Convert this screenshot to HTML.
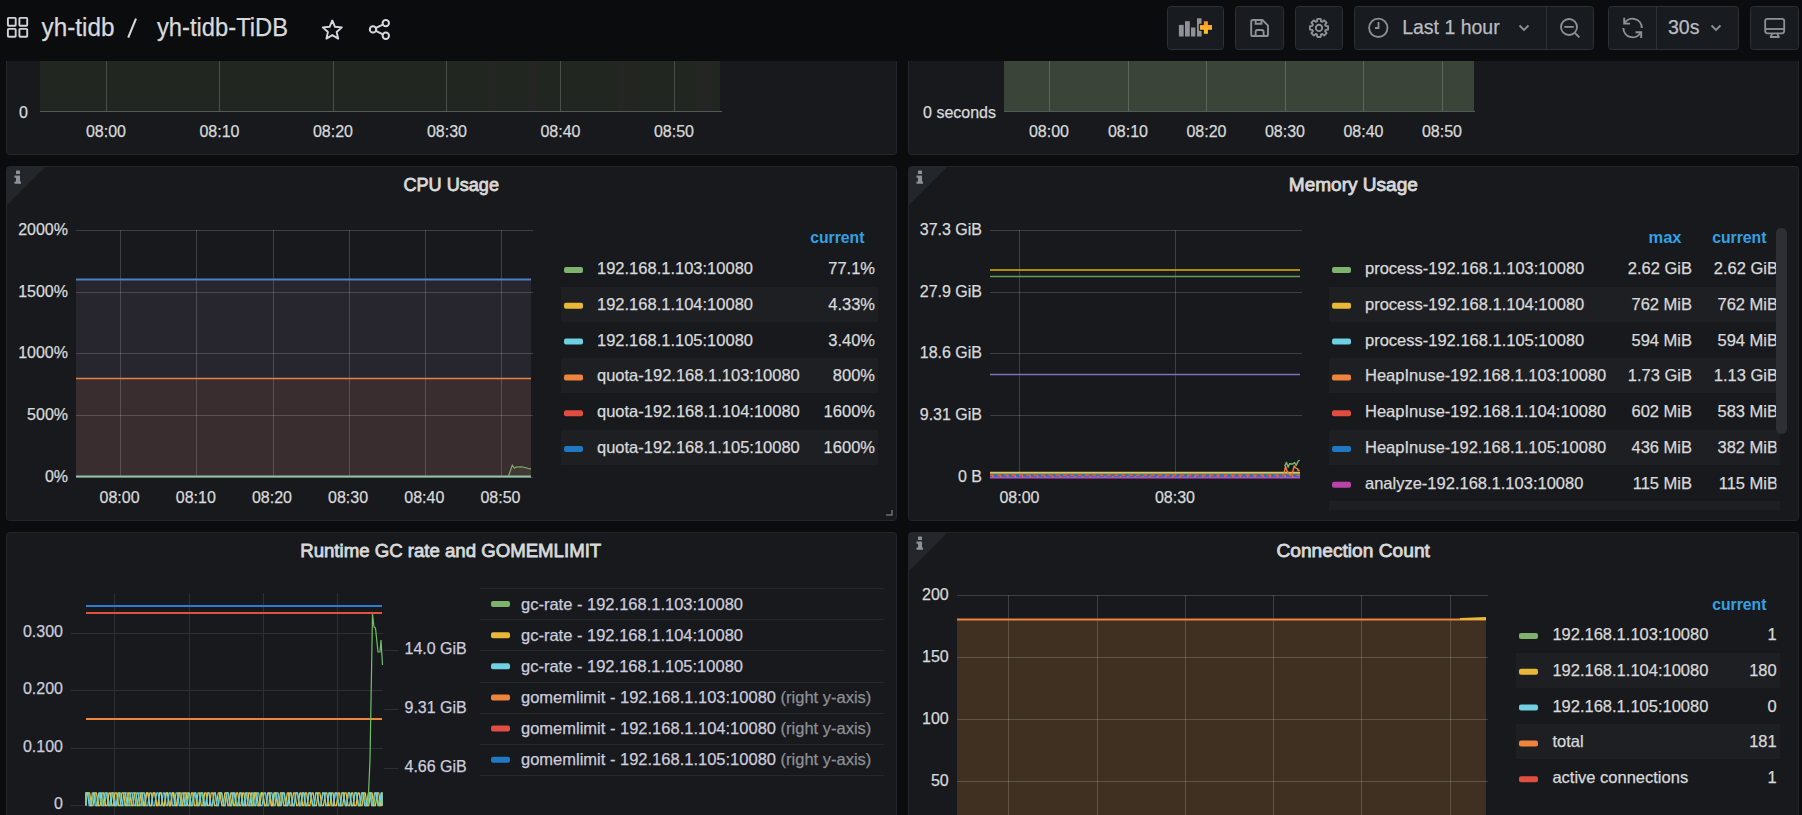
<!DOCTYPE html>
<html><head><meta charset="utf-8"><title>yh-tidb-TiDB</title>
<style>
html,body{margin:0;padding:0;background:#0b0c0e;width:1802px;height:815px;overflow:hidden}
svg{position:absolute;left:0;top:0;display:block}
text{font-family:"Liberation Sans",sans-serif}
.t{stroke-width:0.25px}
</style></head><body>
<svg width="1802" height="815" viewBox="0 0 1802 815">
<rect x="0" y="0" width="1802" height="815" fill="#0b0c0e"/>
<rect x="6.5" y="30.5" width="890" height="124" rx="3" ry="3" fill="#17191d" stroke="#24262b" stroke-width="1"/>
<rect x="908.5" y="30.5" width="890" height="124" rx="3" ry="3" fill="#17191d" stroke="#24262b" stroke-width="1"/>
<rect x="6.5" y="166.5" width="890" height="354" rx="3" ry="3" fill="#17191d" stroke="#24262b" stroke-width="1"/>
<rect x="908.5" y="166.5" width="890" height="354" rx="3" ry="3" fill="#17191d" stroke="#24262b" stroke-width="1"/>
<rect x="6.5" y="532.5" width="890" height="307" rx="3" ry="3" fill="#17191d" stroke="#24262b" stroke-width="1"/>
<rect x="908.5" y="532.5" width="890" height="307" rx="3" ry="3" fill="#17191d" stroke="#24262b" stroke-width="1"/>
<rect x="40" y="61" width="680" height="50" fill="#212621" />
<rect x="489" y="61" width="7.5" height="50" fill="#252523" />
<rect x="528.7" y="61" width="8.099999999999909" height="50" fill="#252523" />
<rect x="617.4" y="61" width="8.100000000000023" height="50" fill="#252523" />
<rect x="697" y="61" width="14" height="50" fill="#252523" />
<line x1="106.5" y1="61" x2="106.5" y2="112" stroke="#4b4f4b" stroke-width="1" />
<line x1="219.5" y1="61" x2="219.5" y2="112" stroke="#4b4f4b" stroke-width="1" />
<line x1="333.5" y1="61" x2="333.5" y2="112" stroke="#4b4f4b" stroke-width="1" />
<line x1="446.5" y1="61" x2="446.5" y2="112" stroke="#4b4f4b" stroke-width="1" />
<line x1="560.5" y1="61" x2="560.5" y2="112" stroke="#4b4f4b" stroke-width="1" />
<line x1="674.5" y1="61" x2="674.5" y2="112" stroke="#4b4f4b" stroke-width="1" />
<line x1="40" y1="111.5" x2="722" y2="111.5" stroke="#55585a" stroke-width="1" />
<text x="28" y="117.5" font-size="16" fill="#d8d9da" class="t" stroke="#d8d9da" text-anchor="end" font-weight="normal" >0</text>
<text x="106" y="136.5" font-size="16" fill="#d8d9da" class="t" stroke="#d8d9da" text-anchor="middle" font-weight="normal" >08:00</text>
<text x="219.5" y="136.5" font-size="16" fill="#d8d9da" class="t" stroke="#d8d9da" text-anchor="middle" font-weight="normal" >08:10</text>
<text x="333" y="136.5" font-size="16" fill="#d8d9da" class="t" stroke="#d8d9da" text-anchor="middle" font-weight="normal" >08:20</text>
<text x="447" y="136.5" font-size="16" fill="#d8d9da" class="t" stroke="#d8d9da" text-anchor="middle" font-weight="normal" >08:30</text>
<text x="560.5" y="136.5" font-size="16" fill="#d8d9da" class="t" stroke="#d8d9da" text-anchor="middle" font-weight="normal" >08:40</text>
<text x="674" y="136.5" font-size="16" fill="#d8d9da" class="t" stroke="#d8d9da" text-anchor="middle" font-weight="normal" >08:50</text>
<rect x="1004" y="61" width="470" height="50" fill="#3b4439" />
<line x1="1049.5" y1="61" x2="1049.5" y2="112" stroke="#5c6659" stroke-width="1" />
<line x1="1128.5" y1="61" x2="1128.5" y2="112" stroke="#5c6659" stroke-width="1" />
<line x1="1206.5" y1="61" x2="1206.5" y2="112" stroke="#5c6659" stroke-width="1" />
<line x1="1285.5" y1="61" x2="1285.5" y2="112" stroke="#5c6659" stroke-width="1" />
<line x1="1363.5" y1="61" x2="1363.5" y2="112" stroke="#5c6659" stroke-width="1" />
<line x1="1442.5" y1="61" x2="1442.5" y2="112" stroke="#5c6659" stroke-width="1" />
<line x1="1004" y1="111.5" x2="1475" y2="111.5" stroke="#55585a" stroke-width="1" />
<text x="996" y="117.5" font-size="16" fill="#d8d9da" class="t" stroke="#d8d9da" text-anchor="end" font-weight="normal" >0 seconds</text>
<text x="1049" y="136.5" font-size="16" fill="#d8d9da" class="t" stroke="#d8d9da" text-anchor="middle" font-weight="normal" >08:00</text>
<text x="1128" y="136.5" font-size="16" fill="#d8d9da" class="t" stroke="#d8d9da" text-anchor="middle" font-weight="normal" >08:10</text>
<text x="1206.5" y="136.5" font-size="16" fill="#d8d9da" class="t" stroke="#d8d9da" text-anchor="middle" font-weight="normal" >08:20</text>
<text x="1285" y="136.5" font-size="16" fill="#d8d9da" class="t" stroke="#d8d9da" text-anchor="middle" font-weight="normal" >08:30</text>
<text x="1363.5" y="136.5" font-size="16" fill="#d8d9da" class="t" stroke="#d8d9da" text-anchor="middle" font-weight="normal" >08:40</text>
<text x="1442" y="136.5" font-size="16" fill="#d8d9da" class="t" stroke="#d8d9da" text-anchor="middle" font-weight="normal" >08:50</text>
<path d="M7 167 L45 167 L7 205 Z" fill="#23262b"/>
<rect x="16.0" y="170.5" width="4" height="3.5" rx="0.5" fill="#8e9196"/>
<path d="M14.5 175.5 h5.5 v6 h1 v2.2 h-6.5 v-2.2 h1.5 v-3.8 h-1.5 z" fill="#8e9196"/>
<text x="451.2" y="190.9" font-size="18.6" fill="#d8d9da" stroke="#d8d9da" stroke-width="0.8" text-anchor="middle" textLength="95.5" lengthAdjust="spacingAndGlyphs">CPU Usage</text>
<rect x="76" y="279" width="455" height="198" fill="#27252e" />
<rect x="76" y="378.5" width="455" height="98.5" fill="#3a2d2f" />
<line x1="76" y1="230.5" x2="533" y2="230.5" stroke="rgba(255,255,255,0.17)" stroke-width="1" />
<line x1="76" y1="292.5" x2="533" y2="292.5" stroke="rgba(255,255,255,0.17)" stroke-width="1" />
<line x1="76" y1="353.5" x2="533" y2="353.5" stroke="rgba(255,255,255,0.17)" stroke-width="1" />
<line x1="76" y1="415.5" x2="533" y2="415.5" stroke="rgba(255,255,255,0.17)" stroke-width="1" />
<line x1="76" y1="477.5" x2="533" y2="477.5" stroke="rgba(255,255,255,0.17)" stroke-width="1" />
<line x1="120.5" y1="230" x2="120.5" y2="477" stroke="rgba(255,255,255,0.17)" stroke-width="1" />
<line x1="196.5" y1="230" x2="196.5" y2="477" stroke="rgba(255,255,255,0.17)" stroke-width="1" />
<line x1="273.5" y1="230" x2="273.5" y2="477" stroke="rgba(255,255,255,0.17)" stroke-width="1" />
<line x1="349.5" y1="230" x2="349.5" y2="477" stroke="rgba(255,255,255,0.17)" stroke-width="1" />
<line x1="425.5" y1="230" x2="425.5" y2="477" stroke="rgba(255,255,255,0.17)" stroke-width="1" />
<line x1="501.5" y1="230" x2="501.5" y2="477" stroke="rgba(255,255,255,0.17)" stroke-width="1" />
<line x1="76" y1="279.5" x2="531" y2="279.5" stroke="#4f7fc4" stroke-width="2" />
<line x1="76" y1="378.5" x2="531" y2="378.5" stroke="#e5824a" stroke-width="1.5" />
<line x1="76" y1="476.5" x2="531" y2="476.5" stroke="#94c2a6" stroke-width="2" />
<polygon points="508.5,476 512.3,465.2 514.5,468.3 516,467 521.5,466.8 526,467.8 529.5,469 531,468.5 531,476" fill="rgba(126,178,109,0.10)"/>
<polyline points="508.5,476 512.3,465.2 514.5,468.3 516,467 521.5,466.8 526,467.8 529.5,469 531,468.5" fill="none" stroke="#82b571" stroke-width="1.1"/>
<text x="68" y="234.8" font-size="16" fill="#d8d9da" class="t" stroke="#d8d9da" text-anchor="end" font-weight="normal" >2000%</text>
<text x="68" y="296.5" font-size="16" fill="#d8d9da" class="t" stroke="#d8d9da" text-anchor="end" font-weight="normal" >1500%</text>
<text x="68" y="358.2" font-size="16" fill="#d8d9da" class="t" stroke="#d8d9da" text-anchor="end" font-weight="normal" >1000%</text>
<text x="68" y="419.90000000000003" font-size="16" fill="#d8d9da" class="t" stroke="#d8d9da" text-anchor="end" font-weight="normal" >500%</text>
<text x="68" y="481.6" font-size="16" fill="#d8d9da" class="t" stroke="#d8d9da" text-anchor="end" font-weight="normal" >0%</text>
<text x="119.6" y="502.8" font-size="16" fill="#d8d9da" class="t" stroke="#d8d9da" text-anchor="middle" font-weight="normal" >08:00</text>
<text x="195.8" y="502.8" font-size="16" fill="#d8d9da" class="t" stroke="#d8d9da" text-anchor="middle" font-weight="normal" >08:10</text>
<text x="272" y="502.8" font-size="16" fill="#d8d9da" class="t" stroke="#d8d9da" text-anchor="middle" font-weight="normal" >08:20</text>
<text x="348.1" y="502.8" font-size="16" fill="#d8d9da" class="t" stroke="#d8d9da" text-anchor="middle" font-weight="normal" >08:30</text>
<text x="424.3" y="502.8" font-size="16" fill="#d8d9da" class="t" stroke="#d8d9da" text-anchor="middle" font-weight="normal" >08:40</text>
<text x="500.5" y="502.8" font-size="16" fill="#d8d9da" class="t" stroke="#d8d9da" text-anchor="middle" font-weight="normal" >08:50</text>
<text x="864.5" y="243.3" font-size="16.3" fill="#33a2e5" text-anchor="end" font-weight="bold" textLength="54.3" lengthAdjust="spacingAndGlyphs">current</text>
<rect x="564" y="267.0" width="19" height="6" rx="2" fill="#7eb26d"/>
<text x="597" y="274.0" font-size="16.5" fill="#d8d9da" class="t" stroke="#d8d9da" text-anchor="start" font-weight="normal" >192.168.1.103:10080</text>
<text x="875" y="274.0" font-size="16.5" fill="#d8d9da" class="t" stroke="#d8d9da" text-anchor="end" font-weight="normal" >77.1%</text>
<rect x="561" y="287" width="317" height="35" fill="#1e1f23" />
<rect x="564" y="302.8" width="19" height="6" rx="2" fill="#eab839"/>
<text x="597" y="309.8" font-size="16.5" fill="#d8d9da" class="t" stroke="#d8d9da" text-anchor="start" font-weight="normal" >192.168.1.104:10080</text>
<text x="875" y="309.8" font-size="16.5" fill="#d8d9da" class="t" stroke="#d8d9da" text-anchor="end" font-weight="normal" >4.33%</text>
<rect x="564" y="338.6" width="19" height="6" rx="2" fill="#6ed0e0"/>
<text x="597" y="345.6" font-size="16.5" fill="#d8d9da" class="t" stroke="#d8d9da" text-anchor="start" font-weight="normal" >192.168.1.105:10080</text>
<text x="875" y="345.6" font-size="16.5" fill="#d8d9da" class="t" stroke="#d8d9da" text-anchor="end" font-weight="normal" >3.40%</text>
<rect x="561" y="358" width="317" height="35" fill="#1e1f23" />
<rect x="564" y="374.4" width="19" height="6" rx="2" fill="#ef843c"/>
<text x="597" y="381.4" font-size="16.5" fill="#d8d9da" class="t" stroke="#d8d9da" text-anchor="start" font-weight="normal" >quota-192.168.1.103:10080</text>
<text x="875" y="381.4" font-size="16.5" fill="#d8d9da" class="t" stroke="#d8d9da" text-anchor="end" font-weight="normal" >800%</text>
<rect x="564" y="410.2" width="19" height="6" rx="2" fill="#e24d42"/>
<text x="597" y="417.2" font-size="16.5" fill="#d8d9da" class="t" stroke="#d8d9da" text-anchor="start" font-weight="normal" >quota-192.168.1.104:10080</text>
<text x="875" y="417.2" font-size="16.5" fill="#d8d9da" class="t" stroke="#d8d9da" text-anchor="end" font-weight="normal" >1600%</text>
<rect x="561" y="430" width="317" height="35" fill="#1e1f23" />
<rect x="564" y="446.0" width="19" height="6" rx="2" fill="#1f78c1"/>
<text x="597" y="453.0" font-size="16.5" fill="#d8d9da" class="t" stroke="#d8d9da" text-anchor="start" font-weight="normal" >quota-192.168.1.105:10080</text>
<text x="875" y="453.0" font-size="16.5" fill="#d8d9da" class="t" stroke="#d8d9da" text-anchor="end" font-weight="normal" >1600%</text>
<path d="M886 515 h6 v-5" fill="none" stroke="#6e7073" stroke-width="1.5"/>
<path d="M909 167 L947 167 L909 205 Z" fill="#23262b"/>
<rect x="918.0" y="170.5" width="4" height="3.5" rx="0.5" fill="#8e9196"/>
<path d="M916.5 175.5 h5.5 v6 h1 v2.2 h-6.5 v-2.2 h1.5 v-3.8 h-1.5 z" fill="#8e9196"/>
<text x="1353.3" y="190.9" font-size="18.6" fill="#d8d9da" stroke="#d8d9da" stroke-width="0.8" text-anchor="middle" textLength="129" lengthAdjust="spacingAndGlyphs">Memory Usage</text>
<line x1="990" y1="230.5" x2="1302" y2="230.5" stroke="rgba(255,255,255,0.17)" stroke-width="1" />
<line x1="990" y1="292.5" x2="1302" y2="292.5" stroke="rgba(255,255,255,0.17)" stroke-width="1" />
<line x1="990" y1="353.5" x2="1302" y2="353.5" stroke="rgba(255,255,255,0.17)" stroke-width="1" />
<line x1="990" y1="415.5" x2="1302" y2="415.5" stroke="rgba(255,255,255,0.17)" stroke-width="1" />
<line x1="990" y1="477.5" x2="1300" y2="477.5" stroke="rgba(255,255,255,0.17)" stroke-width="1" />
<line x1="1019.5" y1="230" x2="1019.5" y2="477" stroke="rgba(255,255,255,0.17)" stroke-width="1" />
<line x1="1175.5" y1="230" x2="1175.5" y2="477" stroke="rgba(255,255,255,0.17)" stroke-width="1" />
<line x1="990" y1="270" x2="1300" y2="270" stroke="#e0b400" stroke-width="1.5" />
<line x1="990" y1="276.5" x2="1300" y2="276.5" stroke="#629e51" stroke-width="1.5" />
<line x1="990" y1="374.5" x2="1300" y2="374.5" stroke="#806eb7" stroke-width="1.5" />
<line x1="990" y1="476" x2="1300" y2="476" stroke="#1f78c1" stroke-width="2.2" />
<line x1="990" y1="477.7" x2="1300" y2="477.7" stroke="#d044c0" stroke-width="1.6" />
<line x1="990" y1="473.9" x2="1300" y2="473.9" stroke="#6ed0e0" stroke-width="1.2" />
<line x1="990" y1="472.4" x2="1300" y2="472.4" stroke="#f2c040" stroke-width="1.5" />
<line x1="990" y1="475.2" x2="1300" y2="475.2" stroke="#f05a32" stroke-width="1.6" stroke-dasharray="4 3.3"/>
<line x1="992" y1="476.7" x2="1300" y2="476.7" stroke="#f07838" stroke-width="1" stroke-dasharray="1.5 6"/>
<polyline points="1284.6,466.3 1286.5,462.4 1288.2,467.2 1289.5,463.7 1292.7,464 1294.5,462.4 1296.2,465.5 1297.9,461.6 1299.6,460.1" fill="none" stroke="#7eb26d" stroke-width="1.4" stroke-linejoin="round"/>
<polyline points="1284.2,473.2 1285.5,466.3 1287.2,471.5 1289.3,474 1292.3,473.4 1294.2,465.9 1295.8,468 1297.5,468.9 1298.3,470.6 1299.6,470.2" fill="none" stroke="#ef843c" stroke-width="1.4" stroke-linejoin="round"/>
<text x="982" y="234.8" font-size="16" fill="#d8d9da" class="t" stroke="#d8d9da" text-anchor="end" font-weight="normal" >37.3 GiB</text>
<text x="982" y="296.5" font-size="16" fill="#d8d9da" class="t" stroke="#d8d9da" text-anchor="end" font-weight="normal" >27.9 GiB</text>
<text x="982" y="358.2" font-size="16" fill="#d8d9da" class="t" stroke="#d8d9da" text-anchor="end" font-weight="normal" >18.6 GiB</text>
<text x="982" y="419.90000000000003" font-size="16" fill="#d8d9da" class="t" stroke="#d8d9da" text-anchor="end" font-weight="normal" >9.31 GiB</text>
<text x="982" y="481.6" font-size="16" fill="#d8d9da" class="t" stroke="#d8d9da" text-anchor="end" font-weight="normal" >0 B</text>
<text x="1019.5" y="502.8" font-size="16" fill="#d8d9da" class="t" stroke="#d8d9da" text-anchor="middle" font-weight="normal" >08:00</text>
<text x="1175" y="502.8" font-size="16" fill="#d8d9da" class="t" stroke="#d8d9da" text-anchor="middle" font-weight="normal" >08:30</text>
<text x="1681.5" y="243.3" font-size="16.3" fill="#33a2e5" text-anchor="end" font-weight="bold" textLength="33" lengthAdjust="spacingAndGlyphs">max</text>
<text x="1766.5" y="243.3" font-size="16.3" fill="#33a2e5" text-anchor="end" font-weight="bold" textLength="54.3" lengthAdjust="spacingAndGlyphs">current</text>
<clipPath id="memclip"><rect x="1325" y="250" width="451.5" height="260"/></clipPath>
<clipPath id="memclip2"><rect x="1325" y="250" width="455" height="260"/></clipPath>
<g clip-path="url(#memclip2)">
<rect x="1329" y="287" width="451" height="35" fill="#1e1f23" />
<rect x="1329" y="358" width="451" height="35" fill="#1e1f23" />
<rect x="1329" y="430" width="451" height="35" fill="#1e1f23" />
<rect x="1329" y="501" width="451" height="35" fill="#1e1f23" />
</g>
<g clip-path="url(#memclip)">
<rect x="1332" y="267.0" width="19" height="6" rx="2" fill="#7eb26d"/>
<text x="1365" y="274.0" font-size="16.5" fill="#d8d9da" class="t" stroke="#d8d9da" text-anchor="start" font-weight="normal" >process-192.168.1.103:10080</text>
<text x="1692" y="274.0" font-size="16.5" fill="#d8d9da" class="t" stroke="#d8d9da" text-anchor="end" font-weight="normal" >2.62 GiB</text>
<text x="1778" y="274.0" font-size="16.5" fill="#d8d9da" class="t" stroke="#d8d9da" text-anchor="end" font-weight="normal" >2.62 GiB</text>
<rect x="1332" y="302.8" width="19" height="6" rx="2" fill="#eab839"/>
<text x="1365" y="309.8" font-size="16.5" fill="#d8d9da" class="t" stroke="#d8d9da" text-anchor="start" font-weight="normal" >process-192.168.1.104:10080</text>
<text x="1692" y="309.8" font-size="16.5" fill="#d8d9da" class="t" stroke="#d8d9da" text-anchor="end" font-weight="normal" >762 MiB</text>
<text x="1778" y="309.8" font-size="16.5" fill="#d8d9da" class="t" stroke="#d8d9da" text-anchor="end" font-weight="normal" >762 MiB</text>
<rect x="1332" y="338.6" width="19" height="6" rx="2" fill="#6ed0e0"/>
<text x="1365" y="345.6" font-size="16.5" fill="#d8d9da" class="t" stroke="#d8d9da" text-anchor="start" font-weight="normal" >process-192.168.1.105:10080</text>
<text x="1692" y="345.6" font-size="16.5" fill="#d8d9da" class="t" stroke="#d8d9da" text-anchor="end" font-weight="normal" >594 MiB</text>
<text x="1778" y="345.6" font-size="16.5" fill="#d8d9da" class="t" stroke="#d8d9da" text-anchor="end" font-weight="normal" >594 MiB</text>
<rect x="1332" y="374.4" width="19" height="6" rx="2" fill="#ef843c"/>
<text x="1365" y="381.4" font-size="16.5" fill="#d8d9da" class="t" stroke="#d8d9da" text-anchor="start" font-weight="normal" >HeapInuse-192.168.1.103:10080</text>
<text x="1692" y="381.4" font-size="16.5" fill="#d8d9da" class="t" stroke="#d8d9da" text-anchor="end" font-weight="normal" >1.73 GiB</text>
<text x="1778" y="381.4" font-size="16.5" fill="#d8d9da" class="t" stroke="#d8d9da" text-anchor="end" font-weight="normal" >1.13 GiB</text>
<rect x="1332" y="410.2" width="19" height="6" rx="2" fill="#e24d42"/>
<text x="1365" y="417.2" font-size="16.5" fill="#d8d9da" class="t" stroke="#d8d9da" text-anchor="start" font-weight="normal" >HeapInuse-192.168.1.104:10080</text>
<text x="1692" y="417.2" font-size="16.5" fill="#d8d9da" class="t" stroke="#d8d9da" text-anchor="end" font-weight="normal" >602 MiB</text>
<text x="1778" y="417.2" font-size="16.5" fill="#d8d9da" class="t" stroke="#d8d9da" text-anchor="end" font-weight="normal" >583 MiB</text>
<rect x="1332" y="446.0" width="19" height="6" rx="2" fill="#1f78c1"/>
<text x="1365" y="453.0" font-size="16.5" fill="#d8d9da" class="t" stroke="#d8d9da" text-anchor="start" font-weight="normal" >HeapInuse-192.168.1.105:10080</text>
<text x="1692" y="453.0" font-size="16.5" fill="#d8d9da" class="t" stroke="#d8d9da" text-anchor="end" font-weight="normal" >436 MiB</text>
<text x="1778" y="453.0" font-size="16.5" fill="#d8d9da" class="t" stroke="#d8d9da" text-anchor="end" font-weight="normal" >382 MiB</text>
<rect x="1332" y="481.79999999999995" width="19" height="6" rx="2" fill="#ba43a9"/>
<text x="1365" y="488.79999999999995" font-size="16.5" fill="#d8d9da" class="t" stroke="#d8d9da" text-anchor="start" font-weight="normal" >analyze-192.168.1.103:10080</text>
<text x="1692" y="488.79999999999995" font-size="16.5" fill="#d8d9da" class="t" stroke="#d8d9da" text-anchor="end" font-weight="normal" >115 MiB</text>
<text x="1778" y="488.79999999999995" font-size="16.5" fill="#d8d9da" class="t" stroke="#d8d9da" text-anchor="end" font-weight="normal" >115 MiB</text>
</g>
<rect x="1776" y="228" width="11" height="206" rx="5" fill="#2c2f34"/>
<text x="450.7" y="557" font-size="18.6" fill="#d8d9da" stroke="#d8d9da" stroke-width="0.8" text-anchor="middle" textLength="301" lengthAdjust="spacingAndGlyphs">Runtime GC rate and GOMEMLIMIT</text>
<line x1="71" y1="633.5" x2="383" y2="633.5" stroke="#2c2f33" stroke-width="1" />
<line x1="71" y1="690.5" x2="383" y2="690.5" stroke="#2c2f33" stroke-width="1" />
<line x1="71" y1="748.5" x2="383" y2="748.5" stroke="#2c2f33" stroke-width="1" />
<line x1="71" y1="805.5" x2="383" y2="805.5" stroke="#2c2f33" stroke-width="1" />
<line x1="114.5" y1="593" x2="114.5" y2="815" stroke="#2c2f33" stroke-width="1" />
<line x1="189.5" y1="593" x2="189.5" y2="815" stroke="#2c2f33" stroke-width="1" />
<line x1="263.5" y1="593" x2="263.5" y2="815" stroke="#2c2f33" stroke-width="1" />
<line x1="337.5" y1="593" x2="337.5" y2="815" stroke="#2c2f33" stroke-width="1" />
<line x1="86" y1="606" x2="382" y2="606" stroke="#2f7bd3" stroke-width="2" />
<line x1="86" y1="613" x2="382" y2="613" stroke="#e2503f" stroke-width="2" />
<line x1="86" y1="719" x2="382" y2="719" stroke="#f0853c" stroke-width="2" />
<polyline points="86,805.6 86,792.8 88.34,792.8 90.04,805.6 91.51,805.6 93.38,792.8 94.78,792.8 96.56,805.6 98.05,805.6 99.96,792.8 101.47,792.8 103.38,805.6 104.65,805.6 106.25,792.8 107.49,792.8 109.07,805.6 110.67,805.6 112.70,792.8 114.05,792.8 115.77,805.6 117.10,805.6 118.80,792.8 120.47,792.8 122.59,805.6 124.03,805.6 125.86,792.8 127.46,792.8 129.50,805.6 130.94,805.6 132.77,792.8 134.29,792.8 136.21,805.6 137.51,805.6 139.17,792.8 140.68,792.8 142.60,805.6 144.21,805.6 146.26,792.8 147.73,792.8 149.59,805.6 151.14,805.6 153.13,792.8 154.65,792.8 156.60,805.6 157.86,805.6 159.46,792.8 161.03,792.8 163.02,805.6 164.51,805.6 166.41,792.8 167.78,792.8 169.51,805.6 170.76,805.6 172.35,792.8 173.96,792.8 176.01,805.6 177.45,805.6 179.28,792.8 180.83,792.8 182.80,805.6 184.42,805.6 186.48,792.8 188.02,792.8 189.99,805.6 191.62,805.6 193.70,792.8 195.11,792.8 196.90,805.6 198.48,805.6 200.50,792.8 201.93,792.8 203.74,805.6 205.39,805.6 207.47,792.8 209.09,792.8 211.15,805.6 212.43,805.6 214.05,792.8 215.34,792.8 216.99,805.6 218.32,805.6 220.01,792.8 221.67,792.8 223.77,805.6 225.20,805.6 227.01,792.8 228.52,792.8 230.43,805.6 231.80,805.6 233.54,792.8 234.99,792.8 236.84,805.6 238.25,805.6 240.03,792.8 241.42,792.8 243.18,805.6 244.67,805.6 246.57,792.8 248.06,792.8 249.95,805.6 251.58,805.6 253.65,792.8 255.18,792.8 257.13,805.6 258.77,805.6 260.86,792.8 262.46,792.8 264.51,805.6 266.17,805.6 268.29,792.8 269.82,792.8 271.76,805.6 273.07,805.6 274.73,792.8 276.34,792.8 278.39,805.6 280.04,805.6 282.15,792.8 283.78,792.8 285.85,805.6 287.33,805.6 289.22,792.8 290.76,792.8 292.73,805.6 294.05,805.6 295.74,792.8 297.34,792.8 299.37,805.6 300.85,805.6 302.74,792.8 304.10,792.8 305.83,805.6 307.09,805.6 308.70,792.8 310.30,792.8 312.35,805.6 314.01,805.6 316.13,792.8 317.41,792.8 319.03,805.6 320.61,805.6 322.62,792.8 324.04,792.8 325.84,805.6 327.14,805.6 328.79,792.8 330.15,792.8 331.89,805.6 333.45,805.6 335.45,792.8 337.07,792.8 339.12,805.6 340.37,805.6 341.97,792.8 343.47,792.8 345.38,805.6 346.64,805.6 348.23,792.8 349.78,792.8 351.75,805.6 353.13,805.6 354.88,792.8 356.50,792.8 358.56,805.6 360.22,805.6 362.33,792.8 363.79,792.8 365.64,805.6 367.31,805.6 369.43,792.8 370.80,792.8 372.54,805.6 373.81,805.6 375.43,792.8 376.92,792.8 378.82,805.6 380.07,805.6 381.66,792.8 382.00,792.8 382.00,805.6" fill="none" stroke="#73bf69" stroke-width="1.3" stroke-linejoin="round"/>
<polyline points="86,805.6 86,792.8 89.66,792.8 91.52,805.6 93.03,805.6 94.95,792.8 96.48,792.8 98.43,805.6 100.03,805.6 102.06,792.8 103.57,792.8 105.49,805.6 107.07,805.6 109.09,792.8 110.30,792.8 111.84,805.6 113.24,805.6 115.01,792.8 116.60,792.8 118.63,805.6 120.11,805.6 121.98,792.8 123.55,792.8 125.56,805.6 126.81,805.6 128.39,792.8 129.79,792.8 131.56,805.6 132.86,805.6 134.52,792.8 135.94,792.8 137.76,805.6 139.20,805.6 141.03,792.8 142.23,792.8 143.76,805.6 145.05,805.6 146.69,792.8 148.01,792.8 149.68,805.6 151.26,805.6 153.28,792.8 154.80,792.8 156.73,805.6 158.00,805.6 159.61,792.8 161.14,792.8 163.09,805.6 164.35,805.6 165.95,792.8 167.40,792.8 169.26,805.6 170.51,805.6 172.10,792.8 173.30,792.8 174.82,805.6 176.39,805.6 178.38,792.8 179.66,792.8 181.30,805.6 182.59,805.6 184.23,792.8 185.84,792.8 187.89,805.6 189.46,805.6 191.45,792.8 192.77,792.8 194.45,805.6 196.05,805.6 198.09,792.8 199.51,792.8 201.33,805.6 202.81,805.6 204.70,792.8 205.98,792.8 207.61,805.6 209.21,805.6 211.24,792.8 212.73,792.8 214.62,805.6 216.22,805.6 218.27,792.8 219.84,792.8 221.85,805.6 223.17,805.6 224.85,792.8 226.20,792.8 227.92,805.6 229.19,805.6 230.80,792.8 232.06,792.8 233.66,805.6 234.88,805.6 236.44,792.8 237.77,792.8 239.45,805.6 240.90,805.6 242.75,792.8 243.95,792.8 245.47,805.6 246.96,805.6 248.84,792.8 250.18,792.8 251.89,805.6 253.22,805.6 254.91,792.8 256.45,792.8 258.41,805.6 259.81,805.6 261.59,792.8 262.92,792.8 264.62,805.6 266.02,805.6 267.80,792.8 269.29,792.8 271.19,805.6 272.42,805.6 273.97,792.8 275.58,792.8 277.62,805.6 278.83,805.6 280.37,792.8 281.88,792.8 283.81,805.6 285.36,805.6 287.34,792.8 288.54,792.8 290.08,805.6 291.60,805.6 293.55,792.8 294.90,792.8 296.62,805.6 298.06,805.6 299.90,792.8 301.10,792.8 302.63,805.6 303.84,805.6 305.39,792.8 306.67,792.8 308.29,805.6 309.89,805.6 311.92,792.8 313.20,792.8 314.83,805.6 316.35,805.6 318.28,792.8 319.87,792.8 321.89,805.6 323.48,805.6 325.51,792.8 326.86,792.8 328.56,805.6 329.91,805.6 331.62,792.8 333.04,792.8 334.85,805.6 336.37,805.6 338.31,792.8 339.56,792.8 341.14,805.6 342.65,805.6 344.58,792.8 346.11,792.8 348.06,805.6 349.62,805.6 351.61,792.8 352.82,792.8 354.36,805.6 355.96,805.6 357.99,792.8 359.22,792.8 360.80,805.6 362.14,805.6 363.84,792.8 365.30,792.8 367.15,805.6 368.73,805.6 370.75,792.8 372.09,792.8 373.80,805.6 375.38,805.6 377.40,792.8 378.83,792.8 380.65,805.6 381.98,805.6 382.00,792.8" fill="none" stroke="#f2c037" stroke-width="1.3" stroke-linejoin="round"/>
<polyline points="86,805.6 86,792.8 87.41,792.8 89.21,805.6 90.59,805.6 92.34,792.8 93.62,792.8 95.24,805.6 96.83,805.6 98.85,792.8 100.06,792.8 101.61,805.6 103.05,805.6 104.87,792.8 106.47,792.8 108.51,805.6 109.76,805.6 111.35,792.8 112.80,792.8 114.65,805.6 116.13,805.6 118.01,792.8 119.25,792.8 120.82,805.6 122.19,805.6 123.95,792.8 125.46,792.8 127.40,805.6 128.81,805.6 130.60,792.8 132.13,792.8 134.07,805.6 135.35,805.6 136.98,792.8 138.30,792.8 139.98,805.6 141.24,805.6 142.85,792.8 144.28,792.8 146.11,805.6 147.72,805.6 149.77,792.8 151.24,792.8 153.11,805.6 154.65,805.6 156.62,792.8 158.00,792.8 159.76,805.6 161.30,805.6 163.25,792.8 164.51,792.8 166.11,805.6 167.45,805.6 169.16,792.8 170.66,792.8 172.58,805.6 174.11,805.6 176.05,792.8 177.45,792.8 179.22,805.6 180.48,805.6 182.07,792.8 183.40,792.8 185.09,805.6 186.40,805.6 188.06,792.8 189.40,792.8 191.10,805.6 192.66,805.6 194.65,792.8 195.95,792.8 197.61,805.6 199.20,805.6 201.23,792.8 202.83,792.8 204.85,805.6 206.09,805.6 207.67,792.8 209.05,792.8 210.80,805.6 212.23,805.6 214.04,792.8 215.27,792.8 216.83,805.6 218.23,805.6 220.00,792.8 221.61,792.8 223.65,805.6 224.91,805.6 226.52,792.8 227.99,792.8 229.87,805.6 231.13,805.6 232.75,792.8 234.21,792.8 236.07,805.6 237.67,805.6 239.71,792.8 241.01,792.8 242.67,805.6 243.89,805.6 245.44,792.8 246.69,792.8 248.28,805.6 249.73,805.6 251.57,792.8 252.80,792.8 254.35,805.6 255.60,805.6 257.20,792.8 258.63,792.8 260.44,805.6 262.06,805.6 264.11,792.8 265.50,792.8 267.28,805.6 268.66,805.6 270.43,792.8 271.92,792.8 273.81,805.6 275.07,805.6 276.67,792.8 278.13,792.8 279.99,805.6 281.28,805.6 282.93,792.8 284.40,792.8 286.28,805.6 287.91,805.6 289.98,792.8 291.22,792.8 292.79,805.6 294.25,805.6 296.10,792.8 297.57,792.8 299.45,805.6 300.73,805.6 302.36,792.8 303.69,792.8 305.38,805.6 307.03,805.6 309.12,792.8 310.76,792.8 312.85,805.6 314.12,805.6 315.73,792.8 317.25,792.8 319.18,805.6 320.81,805.6 322.87,792.8 324.19,792.8 325.87,805.6 327.34,805.6 329.22,792.8 330.46,792.8 332.03,805.6 333.40,805.6 335.15,792.8 336.65,792.8 338.57,805.6 340.04,805.6 341.91,792.8 343.45,792.8 345.42,805.6 346.68,805.6 348.27,792.8 349.63,792.8 351.37,805.6 352.96,805.6 354.98,792.8 356.44,792.8 358.31,805.6 359.72,805.6 361.51,792.8 362.90,792.8 364.67,805.6 366.30,805.6 368.39,792.8 369.85,792.8 371.71,805.6 372.94,805.6 374.49,792.8 376.05,792.8 378.03,805.6 379.39,805.6 381.12,792.8 382.00,792.8 382.00,805.6" fill="none" stroke="#6ed0e0" stroke-width="1.3" stroke-linejoin="round"/>
<polyline points="368,805 370,760 372.5,614 374,627 375.5,628 378,652 380,652 381,640 382.5,665" fill="none" stroke="#73bf69" stroke-width="1.2"/>
<text x="63" y="637.1" font-size="16" fill="#ccccdc" class="t" stroke="#ccccdc" text-anchor="end" font-weight="normal" >0.300</text>
<text x="63" y="694.1" font-size="16" fill="#ccccdc" class="t" stroke="#ccccdc" text-anchor="end" font-weight="normal" >0.200</text>
<text x="63" y="752.1" font-size="16" fill="#ccccdc" class="t" stroke="#ccccdc" text-anchor="end" font-weight="normal" >0.100</text>
<text x="63" y="809.1" font-size="16" fill="#ccccdc" class="t" stroke="#ccccdc" text-anchor="end" font-weight="normal" >0</text>
<line x1="384" y1="650.5" x2="398" y2="650.5" stroke="#2c2f33" stroke-width="1" />
<text x="404.5" y="653.8" font-size="16" fill="#ccccdc" class="t" stroke="#ccccdc" text-anchor="start" font-weight="normal" >14.0 GiB</text>
<line x1="384" y1="709.5" x2="398" y2="709.5" stroke="#2c2f33" stroke-width="1" />
<text x="404.5" y="712.8" font-size="16" fill="#ccccdc" class="t" stroke="#ccccdc" text-anchor="start" font-weight="normal" >9.31 GiB</text>
<line x1="384" y1="768.5" x2="398" y2="768.5" stroke="#2c2f33" stroke-width="1" />
<text x="404.5" y="771.8" font-size="16" fill="#ccccdc" class="t" stroke="#ccccdc" text-anchor="start" font-weight="normal" >4.66 GiB</text>
<line x1="480" y1="588.5" x2="884" y2="588.5" stroke="#25282c" stroke-width="1" />
<line x1="480" y1="619.5" x2="884" y2="619.5" stroke="#25282c" stroke-width="1" />
<line x1="480" y1="650.5" x2="884" y2="650.5" stroke="#25282c" stroke-width="1" />
<line x1="480" y1="682.5" x2="884" y2="682.5" stroke="#25282c" stroke-width="1" />
<line x1="480" y1="713.5" x2="884" y2="713.5" stroke="#25282c" stroke-width="1" />
<line x1="480" y1="744.5" x2="884" y2="744.5" stroke="#25282c" stroke-width="1" />
<line x1="480" y1="775.5" x2="884" y2="775.5" stroke="#25282c" stroke-width="1" />
<rect x="491" y="601.0" width="19" height="6" rx="2" fill="#7eb26d"/>
<text x="521" y="609.5" font-size="16.5" fill="#ccccdc" class="t" stroke="#ccccdc" text-anchor="start" font-weight="normal" >gc-rate - 192.168.1.103:10080</text>
<rect x="491" y="632.15" width="19" height="6" rx="2" fill="#eab839"/>
<text x="521" y="640.65" font-size="16.5" fill="#ccccdc" class="t" stroke="#ccccdc" text-anchor="start" font-weight="normal" >gc-rate - 192.168.1.104:10080</text>
<rect x="491" y="663.3" width="19" height="6" rx="2" fill="#6ed0e0"/>
<text x="521" y="671.8" font-size="16.5" fill="#ccccdc" class="t" stroke="#ccccdc" text-anchor="start" font-weight="normal" >gc-rate - 192.168.1.105:10080</text>
<rect x="491" y="694.45" width="19" height="6" rx="2" fill="#ef843c"/>
<text x="521" y="702.95" font-size="16.5" fill="#ccccdc" class="t" stroke="#ccccdc">gomemlimit - 192.168.1.103:10080<tspan fill="#8e8f95" stroke="#8e8f95"> (right y-axis)</tspan></text>
<rect x="491" y="725.6" width="19" height="6" rx="2" fill="#e24d42"/>
<text x="521" y="734.1" font-size="16.5" fill="#ccccdc" class="t" stroke="#ccccdc">gomemlimit - 192.168.1.104:10080<tspan fill="#8e8f95" stroke="#8e8f95"> (right y-axis)</tspan></text>
<rect x="491" y="756.75" width="19" height="6" rx="2" fill="#1f78c1"/>
<text x="521" y="765.25" font-size="16.5" fill="#ccccdc" class="t" stroke="#ccccdc">gomemlimit - 192.168.1.105:10080<tspan fill="#8e8f95" stroke="#8e8f95"> (right y-axis)</tspan></text>
<path d="M909 533 L947 533 L909 571 Z" fill="#23262b"/>
<rect x="918.0" y="536.5" width="4" height="3.5" rx="0.5" fill="#8e9196"/>
<path d="M916.5 541.5 h5.5 v6 h1 v2.2 h-6.5 v-2.2 h1.5 v-3.8 h-1.5 z" fill="#8e9196"/>
<text x="1353.2" y="556.9" font-size="18.6" fill="#d8d9da" stroke="#d8d9da" stroke-width="0.8" text-anchor="middle" textLength="153.5" lengthAdjust="spacingAndGlyphs">Connection Count</text>
<rect x="957" y="619" width="529" height="200" fill="#3f3022" />
<line x1="957" y1="595.5" x2="1488" y2="595.5" stroke="rgba(255,255,255,0.17)" stroke-width="1" />
<line x1="957" y1="657.5" x2="1488" y2="657.5" stroke="rgba(255,255,255,0.17)" stroke-width="1" />
<line x1="957" y1="719.5" x2="1488" y2="719.5" stroke="rgba(255,255,255,0.17)" stroke-width="1" />
<line x1="957" y1="781.5" x2="1488" y2="781.5" stroke="rgba(255,255,255,0.17)" stroke-width="1" />
<line x1="1008.5" y1="595" x2="1008.5" y2="815" stroke="rgba(255,255,255,0.17)" stroke-width="1" />
<line x1="1097.5" y1="595" x2="1097.5" y2="815" stroke="rgba(255,255,255,0.17)" stroke-width="1" />
<line x1="1185.5" y1="595" x2="1185.5" y2="815" stroke="rgba(255,255,255,0.17)" stroke-width="1" />
<line x1="1273.5" y1="595" x2="1273.5" y2="815" stroke="rgba(255,255,255,0.17)" stroke-width="1" />
<line x1="1361.5" y1="595" x2="1361.5" y2="815" stroke="rgba(255,255,255,0.17)" stroke-width="1" />
<line x1="1450.5" y1="595" x2="1450.5" y2="815" stroke="rgba(255,255,255,0.17)" stroke-width="1" />
<line x1="957" y1="619.5" x2="1486" y2="619.5" stroke="#ef843c" stroke-width="2" />
<path d="M1460 618 L1486 617 L1486 620 L1460 620 Z" fill="#eab839"/>
<text x="948.7" y="599.8" font-size="16" fill="#d8d9da" class="t" stroke="#d8d9da" text-anchor="end" font-weight="normal" >200</text>
<text x="948.7" y="661.8" font-size="16" fill="#d8d9da" class="t" stroke="#d8d9da" text-anchor="end" font-weight="normal" >150</text>
<text x="948.7" y="723.8" font-size="16" fill="#d8d9da" class="t" stroke="#d8d9da" text-anchor="end" font-weight="normal" >100</text>
<text x="948.7" y="785.8" font-size="16" fill="#d8d9da" class="t" stroke="#d8d9da" text-anchor="end" font-weight="normal" >50</text>
<text x="1766.5" y="609.7" font-size="16.3" fill="#33a2e5" text-anchor="end" font-weight="bold" textLength="54.3" lengthAdjust="spacingAndGlyphs">current</text>
<rect x="1519" y="633.0" width="19" height="6" rx="2" fill="#7eb26d"/>
<text x="1552.4" y="640.0" font-size="16.5" fill="#d8d9da" class="t" stroke="#d8d9da" text-anchor="start" font-weight="normal" >192.168.1.103:10080</text>
<text x="1776.7" y="640.0" font-size="16.5" fill="#d8d9da" class="t" stroke="#d8d9da" text-anchor="end" font-weight="normal" >1</text>
<rect x="1516" y="653" width="264" height="35" fill="#1e1f23" />
<rect x="1519" y="668.8" width="19" height="6" rx="2" fill="#eab839"/>
<text x="1552.4" y="675.8" font-size="16.5" fill="#d8d9da" class="t" stroke="#d8d9da" text-anchor="start" font-weight="normal" >192.168.1.104:10080</text>
<text x="1776.7" y="675.8" font-size="16.5" fill="#d8d9da" class="t" stroke="#d8d9da" text-anchor="end" font-weight="normal" >180</text>
<rect x="1519" y="704.6" width="19" height="6" rx="2" fill="#6ed0e0"/>
<text x="1552.4" y="711.6" font-size="16.5" fill="#d8d9da" class="t" stroke="#d8d9da" text-anchor="start" font-weight="normal" >192.168.1.105:10080</text>
<text x="1776.7" y="711.6" font-size="16.5" fill="#d8d9da" class="t" stroke="#d8d9da" text-anchor="end" font-weight="normal" >0</text>
<rect x="1516" y="724" width="264" height="35" fill="#1e1f23" />
<rect x="1519" y="740.4" width="19" height="6" rx="2" fill="#ef843c"/>
<text x="1552.4" y="747.4" font-size="16.5" fill="#d8d9da" class="t" stroke="#d8d9da" text-anchor="start" font-weight="normal" >total</text>
<text x="1776.7" y="747.4" font-size="16.5" fill="#d8d9da" class="t" stroke="#d8d9da" text-anchor="end" font-weight="normal" >181</text>
<rect x="1519" y="776.2" width="19" height="6" rx="2" fill="#e24d42"/>
<text x="1552.4" y="783.2" font-size="16.5" fill="#d8d9da" class="t" stroke="#d8d9da" text-anchor="start" font-weight="normal" >active connections</text>
<text x="1776.7" y="783.2" font-size="16.5" fill="#d8d9da" class="t" stroke="#d8d9da" text-anchor="end" font-weight="normal" >1</text>
<rect x="0" y="0" width="1802" height="61" fill="#0b0c0e"/>
<rect x="7.9" y="17.9" width="7.8" height="7.8" rx="0.8" fill="none" stroke="#d0d3d8" stroke-width="1.9"/>
<rect x="19.4" y="17.9" width="7.8" height="7.8" rx="0.8" fill="none" stroke="#d0d3d8" stroke-width="1.9"/>
<rect x="7.9" y="28.9" width="7.8" height="7.8" rx="0.8" fill="none" stroke="#d0d3d8" stroke-width="1.9"/>
<rect x="19.4" y="28.9" width="7.8" height="7.8" rx="0.8" fill="none" stroke="#d0d3d8" stroke-width="1.9"/>
<text x="41.5" y="35.8" font-size="25" fill="#d8d9da" class="t" stroke="#d8d9da" textLength="73" lengthAdjust="spacingAndGlyphs">yh-tidb</text>
<line x1="128.2" y1="37.6" x2="136" y2="18.6" stroke="#d8d9da" stroke-width="2.1"/>
<text x="157" y="35.8" font-size="25" fill="#d8d9da" class="t" stroke="#d8d9da" textLength="131" lengthAdjust="spacingAndGlyphs">yh-tidb-TiDB</text>
<polygon points="332.30,20.50 335.00,26.78 341.81,27.41 336.67,31.92 338.18,38.59 332.30,35.10 326.42,38.59 327.93,31.92 322.79,27.41 329.60,26.78" fill="none" stroke="#d5d9de" stroke-width="1.9" stroke-linejoin="round"/>
<g fill="none" stroke="#d5d9de" stroke-width="2"><circle cx="385.8" cy="23.1" r="3.2"/><circle cx="373" cy="29.4" r="3.2"/><circle cx="385.8" cy="35.8" r="3.2"/><line x1="375.9" y1="27.9" x2="382.9" y2="24.6"/><line x1="375.9" y1="30.9" x2="382.9" y2="34.3"/></g>
<rect x="1167.5" y="6.5" width="56" height="43" rx="3" fill="#181b1f" stroke="#2c2f34"/>
<rect x="1235.5" y="6.5" width="48" height="43" rx="3" fill="#181b1f" stroke="#2c2f34"/>
<rect x="1295.5" y="6.5" width="47" height="43" rx="3" fill="#181b1f" stroke="#2c2f34"/>
<rect x="1354.5" y="6.5" width="239" height="43" rx="3" fill="#181b1f" stroke="#2c2f34"/>
<line x1="1546.5" y1="7" x2="1546.5" y2="49" stroke="#2c2f34"/>
<rect x="1608.5" y="6.5" width="130" height="43" rx="3" fill="#181b1f" stroke="#2c2f34"/>
<line x1="1656.5" y1="7" x2="1656.5" y2="49" stroke="#2c2f34"/>
<rect x="1750.5" y="6.5" width="48" height="43" rx="3" fill="#181b1f" stroke="#2c2f34"/>
<g fill="#8e9297"><rect x="1178.9" y="24.9" width="4.8" height="11.6"/><rect x="1185" y="21.2" width="4.8" height="15.3"/><rect x="1191" y="27.5" width="4.4" height="9"/><rect x="1197" y="18.3" width="4.6" height="18.2"/></g>
<defs><linearGradient id="pg" x1="0" y1="0" x2="0" y2="1"><stop offset="0" stop-color="#ff8a3a"/><stop offset="1" stop-color="#ffcf1f"/></linearGradient></defs>
<path d="M1203.9 21.2 h4 v3.7 h4.1 v4.9 h-4.1 v4 h-4 v-4 h-4 v-4.9 h4 z" fill="#181b1f" stroke="#181b1f" stroke-width="2.2" stroke-linejoin="round"/>
<path d="M1203.9 21.2 h4 v3.7 h4.1 v4.9 h-4.1 v4 h-4 v-4 h-4 v-4.9 h4 z" fill="url(#pg)"/>
<path d="M1252.9 20 H1262.4 L1268 25.6 V34.4 Q1268 36 1266.4 36 H1252.8 Q1251.2 36 1251.2 34.4 V21.6 Q1251.2 20 1252.9 20 Z" fill="none" stroke="#8e9297" stroke-width="1.9" stroke-linejoin="round"/>
<path d="M1255.6 20.5 V23.7 H1261.5 V20.5 M1255.6 36 V32 Q1255.6 30 1257.6 30 H1261.6 Q1263.6 30 1263.6 32 V36" fill="none" stroke="#8e9297" stroke-width="1.9"/>
<polygon points="1316.98,21.30 1317.32,18.85 1320.68,18.85 1321.02,21.30 1322.24,21.81 1324.21,20.32 1326.58,22.69 1325.09,24.66 1325.60,25.88 1328.05,26.22 1328.05,29.58 1325.60,29.92 1325.09,31.14 1326.58,33.11 1324.21,35.48 1322.24,33.99 1321.02,34.50 1320.68,36.95 1317.32,36.95 1316.98,34.50 1315.76,33.99 1313.79,35.48 1311.42,33.11 1312.91,31.14 1312.40,29.92 1309.95,29.58 1309.95,26.22 1312.40,25.88 1312.91,24.66 1311.42,22.69 1313.79,20.32 1315.76,21.81" fill="none" stroke="#8e9297" stroke-width="1.9" stroke-linejoin="round"/>
<circle cx="1319" cy="27.9" r="3.2" fill="none" stroke="#8e9297" stroke-width="1.9"/>
<circle cx="1378.3" cy="27.8" r="9.2" fill="none" stroke="#8e9297" stroke-width="1.8"/><path d="M1378.5 22 v6 h-3.5" fill="none" stroke="#8e9297" stroke-width="1.8"/>
<text x="1402.2" y="34" font-size="20.5" fill="#b9bdc3" class="t" stroke="#b9bdc3" textLength="97.5" lengthAdjust="spacingAndGlyphs">Last 1 hour</text>
<path d="M1519.5 25.5 l4.5 4.5 l4.5 -4.5" fill="none" stroke="#8e9297" stroke-width="1.8"/>
<circle cx="1569" cy="27" r="8" fill="none" stroke="#8e9297" stroke-width="1.8"/><path d="M1564.3 26.9 h9.5 M1575 33 l4.4 4.4" fill="none" stroke="#8e9297" stroke-width="1.8"/>
<path transform="translate(0,-0.6)" d="M1624.6 24 A9.2 9.2 0 0 1 1641.8 28.6 M1623.4 28.6 A9.2 9.2 0 0 0 1640.6 33.2" fill="none" stroke="#8e9297" stroke-width="1.9"/>
<path transform="translate(0,-0.6)" d="M1624.2 18.3 V24.2 H1630 M1641.2 38.5 V32.8 H1635.5" fill="none" stroke="#8e9297" stroke-width="1.9"/>
<text x="1668" y="33.6" font-size="19.5" fill="#b9bdc3" class="t" stroke="#b9bdc3" textLength="31.5" lengthAdjust="spacingAndGlyphs">30s</text>
<path d="M1711.5 25.5 l4.5 4.5 l4.5 -4.5" fill="none" stroke="#8e9297" stroke-width="1.8"/>
<rect x="1765.2" y="18.8" width="19" height="14.5" rx="2.2" fill="none" stroke="#8e9297" stroke-width="1.8"/><line x1="1765.2" y1="29" x2="1784.2" y2="29" stroke="#8e9297" stroke-width="1.8"/><path d="M1772.2 33.8 L1770.6 37 H1778.9 L1777.3 33.8" fill="none" stroke="#8e9297" stroke-width="1.8" stroke-linejoin="round"/>
</svg>
</body></html>
